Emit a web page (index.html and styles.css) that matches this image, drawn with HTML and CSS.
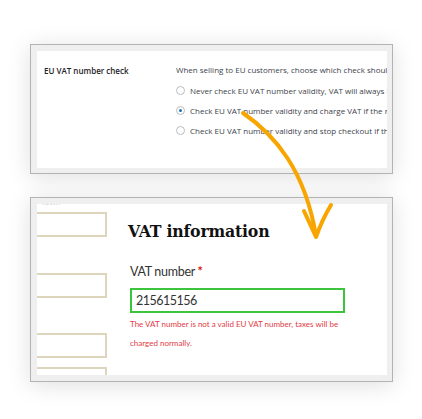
FILE: index.html
```html
<!DOCTYPE html>
<html lang="en">
<head>
<meta charset="utf-8">
<title>EU VAT number check</title>
<link rel="stylesheet" href="styles.css">
</head>
<body>
<div class="page">
  <section class="frame frame-top">
    <div class="panel settings">
      <div class="setting-label">EU VAT number check</div>
      <div class="setting-field">
        <p class="desc">When selling to EU customers, choose which check should be performed</p>
        <div class="radio-row"><span class="radio"></span>Never check EU VAT number validity, VAT will always be removed</div>
        <div class="radio-row"><span class="radio checked"></span>Check EU VAT number validity and charge VAT if the number is invalid</div>
        <div class="radio-row"><span class="radio"></span>Check EU VAT number validity and stop checkout if the number is invalid</div>
        <p class="faded">Allow customers to enter their VAT number during checkout</p>
      </div>
    </div>
  </section>
  <section class="frame frame-bottom">
    <div class="panel checkout">
      <div class="fields-col">
        <div class="mini-label">Town</div>
        <div class="field"></div>
        <div class="field"></div>
        <div class="field"></div>
        <div class="field last"><span class="ph">e-mail</span></div>
      </div>
      <div class="vat-col">
        <h2 class="vat-title">VAT information</h2>
        <div class="vat-label">VAT number <span class="req">*</span></div>
        <div class="vat-input">215615156</div>
        <p class="vat-error">The VAT number is not a valid EU VAT number, taxes will be charged normally.</p>
      </div>
    </div>
  </section>
  <svg class="arrow" width="422" height="419" viewBox="0 0 422 419" aria-hidden="true">
    <path d="M243 113 C 275 135, 305 170, 316 236" fill="none" stroke="#f9a500" stroke-width="4" stroke-linecap="round"/>
    <path d="M304 211 L316 237 Q 322 220 331 205" fill="none" stroke="#f9a500" stroke-width="4" stroke-linecap="round" stroke-linejoin="round"/>
  </svg>
</div>
</body>
</html>
```

FILE: styles.css
```css
html, body {
  margin: 0;
  padding: 0;
  background: #ffffff;
}

.page {
  position: relative;
  width: 422px;
  height: 419px;
  padding: 44px 0 0 30px;
  box-sizing: border-box;
  overflow: hidden;
}

.frame {
  width: 363px;
  box-sizing: border-box;
  border: 1px solid #b3b3b3;
  background: #efefef;
  padding: 6px 5px 5px 6px;
  box-shadow: 0 3px 22px rgba(0, 0, 0, 0.13);
}

.frame-bottom {
  margin-top: 23px;
  padding-bottom: 6px;
}

.panel {
  background: #ffffff;
  overflow: hidden;
  white-space: nowrap;
}

/* top: settings */
.settings {
  height: 117px;
  display: flex;
  font-family: "Open Sans", "DejaVu Sans", sans-serif;
  font-size: 8px;
  color: #3c434a;
}

.setting-label {
  width: 139px;
  flex: none;
  box-sizing: border-box;
  padding: 14px 0 0 7px;
  font-weight: 600;
  color: #1d2327;
}

.setting-field {
  padding-top: 9px;
}

.desc {
  margin: 0;
  line-height: 20px;
}

.radio-row {
  display: flex;
  align-items: center;
  gap: 5px;
  height: 20px;
}

.radio {
  width: 9px;
  height: 9px;
  box-sizing: border-box;
  border: 1px solid #b9bec3;
  border-radius: 50%;
  display: flex;
  align-items: center;
  justify-content: center;
  background: #fff;
}

.radio.checked::after {
  content: "";
  width: 3px;
  height: 3px;
  border-radius: 50%;
  background: #2271b1;
}

.faded {
  margin: 26px 0 0;
  line-height: 10px;
  color: #e2e2e2;
}

/* bottom: checkout */
.checkout {
  height: 171px;
  display: flex;
}

.fields-col {
  width: 70px;
  flex: none;
  display: flex;
  flex-direction: column;
  font-family: "Lato", "Open Sans", sans-serif;
}

.mini-label {
  flex: none;
  height: 8px;
  margin-top: -6px;
  font-size: 8px;
  line-height: 8px;
  color: #d0d0d0;
  padding-left: 4px;
}

.field {
  flex: none;
  height: 25px;
  margin-left: -20px;
  box-sizing: border-box;
  border: 2px solid #ddd6bd;
  margin-top: 6px;
}

.field + .field {
  margin-top: 36px;
}

.field + .field + .field {
  margin-top: 35px;
}

.field + .field.last {
  margin-top: 9px;
}

.ph {
  display: block;
  padding: 5px 0 0 38px;
  font-size: 8px;
  color: #b8b8b8;
}

.vat-col {
  margin-left: 21px;
  width: 220px;
}

.vat-title {
  margin: 15px 0 0;
  font-family: "DejaVu Serif", "Liberation Serif", serif;
  font-stretch: condensed;
  font-weight: bold;
  font-size: 17.5px;
  line-height: 24px;
  color: #111111;
  letter-spacing: -0.2px;
}

.vat-label {
  margin-top: 20px;
  padding-left: 2px;
  font-family: "Lato", "Open Sans", sans-serif;
  font-size: 12.5px;
  letter-spacing: -0.3px;
  line-height: 18px;
  color: #333333;
}

.req {
  color: #e01010;
  font-weight: bold;
}

.vat-input {
  margin: 7px 0 0 2px;
  width: 215px;
  height: 25px;
  box-sizing: border-box;
  border: 2px solid #3cc43c;
  padding-left: 4px;
  font-family: "Lato", "Open Sans", sans-serif;
  font-size: 12.5px;
  letter-spacing: -0.5px;
  line-height: 21px;
  color: #333333;
}

.vat-error {
  margin: 2px 0 0 2px;
  white-space: normal;
  width: 215px;
  font-family: "Lato", "Open Sans", sans-serif;
  font-size: 8px;
  line-height: 19px;
  color: #e33a45;
}

.arrow {
  position: absolute;
  top: 0;
  left: 0;
  pointer-events: none;
}
```
